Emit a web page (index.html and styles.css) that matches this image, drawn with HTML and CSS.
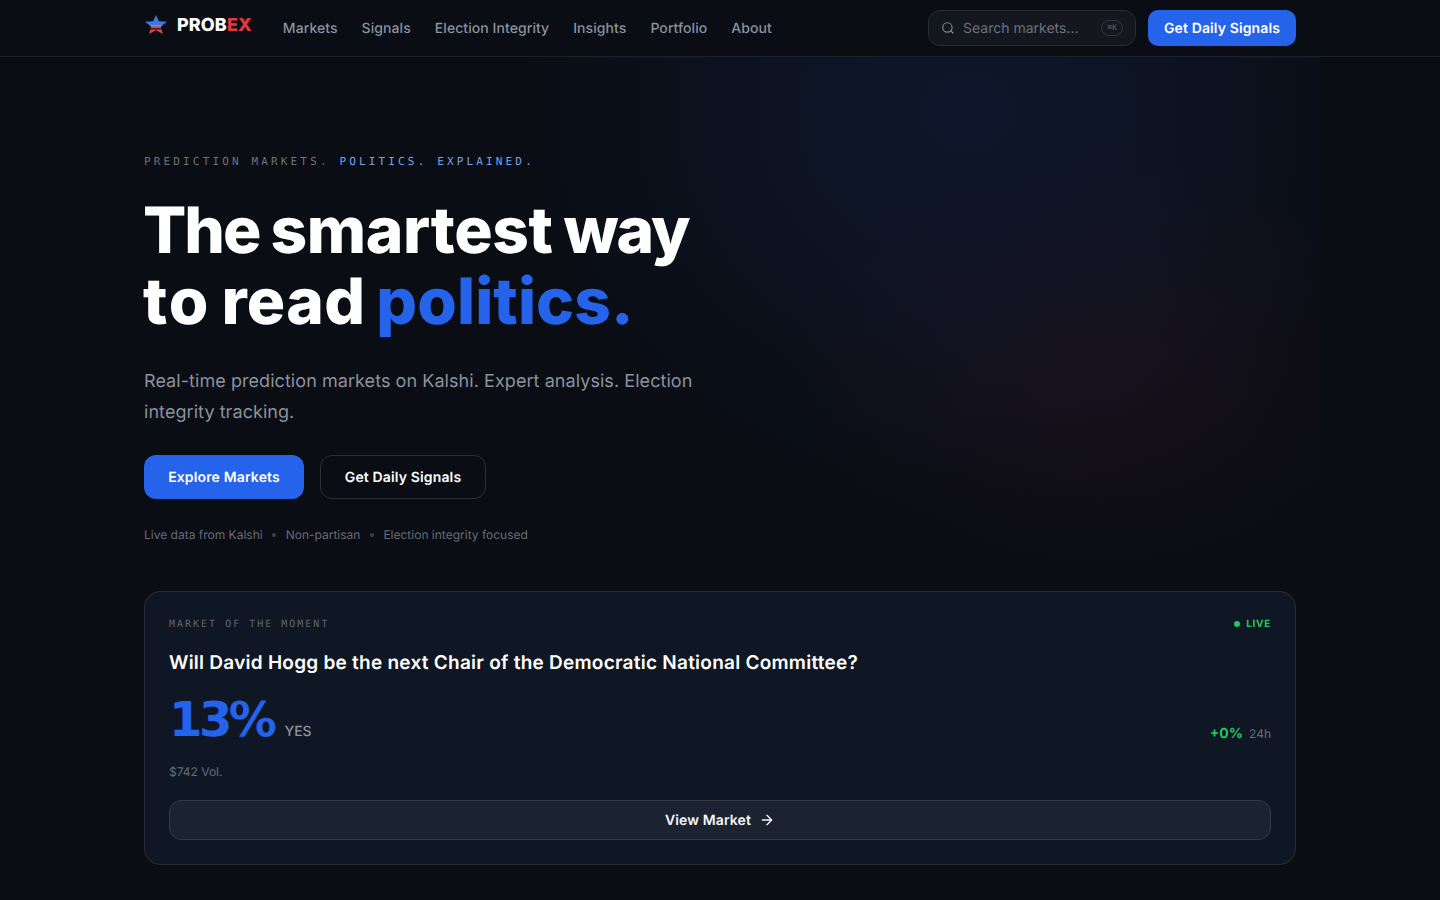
FILE: index.html
```html
<!DOCTYPE html>
<html lang="en">
<head>
<meta charset="utf-8">
<title>ProbEx</title>
<link rel="stylesheet" href="styles.css">
</head>
<body>
<div class="glow" aria-hidden="true"></div>
<header class="topbar">
  <div class="topbar-inner">
    <a class="brand" href="#">
      <svg class="brand-star" width="24" height="20" viewBox="0 0 24 20">
        <defs>
          <clipPath id="starclip"><path d="M12 0l2.900 6.200 8.100.6-6.100 4.600 2 7.600L12 15.200 5.100 19l2-7.600L1 6.800l8.100-.6z"/></clipPath>
        </defs>
        <g clip-path="url(#starclip)">
          <rect x="0" y="0" width="24" height="10.500" fill="#3a78e6"/>
          <rect x="0" y="10.500" width="24" height="1" fill="#dfe3ea"/>
          <rect x="0" y="11.500" width="24" height="2" fill="#d9484c"/>
          <rect x="0" y="13.500" width="24" height="1" fill="#1a1114"/>
          <rect x="0" y="14.500" width="24" height="5" fill="#d9484c"/>
        </g>
      </svg>
      <span class="brand-name">PROB<span class="brand-ex">EX</span></span>
    </a>
    <nav class="nav">
      <a href="#">Markets</a>
      <a href="#">Signals</a>
      <a href="#">Election Integrity</a>
      <a href="#">Insights</a>
      <a href="#">Portfolio</a>
      <a href="#">About</a>
    </nav>
    <div class="topbar-actions">
      <div class="search">
        <svg width="14" height="14" viewBox="0 0 24 24" fill="none" stroke="#7d8590" stroke-width="2" stroke-linecap="round"><circle cx="11" cy="11" r="8"/><path d="M21 21l-4.300-4.300"/></svg>
        <span class="search-text">Search markets...</span>
        <kbd class="kbd">⌘K</kbd>
      </div>
      <a class="btn-small" href="#">Get Daily Signals</a>
    </div>
  </div>
</header>
<main class="page">
  <section class="hero">
    <p class="eyebrow">PREDICTION MARKETS. <span class="eyebrow-blue">POLITICS. EXPLAINED.</span></p>
    <h1 class="headline"><span class="w-tight">The</span> <span class="w-loose">smartest</span> <span class="w-tight">way</span><br><span class="w-wide">to</span> <span class="w-mid">read</span> <span class="headline-blue">politics.</span></h1>
    <p class="lead">Real-time prediction markets on Kalshi. Expert analysis. Election integrity tracking.</p>
    <div class="cta-row">
      <a class="btn btn-primary" href="#">Explore Markets</a>
      <a class="btn btn-ghost" href="#">Get Daily Signals</a>
    </div>
    <ul class="facts">
      <li>Live data from Kalshi</li>
      <li class="fact-dot"></li>
      <li>Non-partisan</li>
      <li class="fact-dot"></li>
      <li>Election integrity focused</li>
    </ul>
  </section>
  <section class="card">
    <div class="card-top">
      <span class="card-label">MARKET OF THE MOMENT</span>
      <span class="live"><span class="live-dot"></span>LIVE</span>
    </div>
    <h2 class="card-title">Will David Hogg be the next Chair of the Democratic National Committee?</h2>
    <div class="stat-row">
      <div class="stat-main"><span class="stat-pct">13%</span><span class="stat-yes">YES</span></div>
      <div class="stat-change"><span class="stat-delta">+0%</span><span class="stat-period">24h</span></div>
    </div>
    <p class="vol">$742 Vol.</p>
    <a class="view" href="#">View Market
      <svg width="16" height="16" viewBox="0 0 24 24" fill="none" stroke="#f4f6f8" stroke-width="2" stroke-linecap="round" stroke-linejoin="round"><path d="M5 12h14M12 5l7 7-7 7"/></svg>
    </a>
  </section>
</main>
</body>
</html>
```
FILE: styles.css
```css
* { box-sizing: border-box; }
html, body { margin: 0; height: 100%; }
body {
  background: #0a0d14;
  color: #fff;
  font-family: Inter, "Liberation Sans", sans-serif;
  text-rendering: geometricPrecision;
  overflow: hidden;
  position: relative;
}
a { color: inherit; text-decoration: none; }
.glow {
  position: absolute;
  left: 520px;
  top: 57px;
  width: 800px;
  height: 543px;
  background:
    radial-gradient(ellipse 330px 240px at 72.5% 58%, rgba(90, 25, 45, 0.15), transparent 100%),
    radial-gradient(ellipse 450px 400px at 56% 10%, rgba(25, 55, 125, 0.23), transparent 100%);
}
.topbar {
  position: relative;
  height: 57px;
  border-bottom: 1px solid #1d212b;
}
.topbar-inner {
  width: 1152px;
  height: 56px;
  margin: 0 auto;
  display: flex;
  align-items: center;
}
.brand { display: flex; align-items: center; gap: 9px; margin-top: -6px; }
.brand-star { display: block; }
.brand-name { font-size: 18px; font-weight: 800; letter-spacing: 0.1px; }
.brand-ex { color: #e5383b; }
.nav { display: flex; gap: 24px; margin-left: 31px; font-size: 14px; font-weight: 500; letter-spacing: 0.07px; color: #8b929e; }
.topbar-actions { margin-left: auto; display: flex; align-items: center; gap: 12px; }
.search {
  width: 208px;
  height: 36px;
  border: 1px solid #2a2e37;
  border-radius: 12px;
  background: #14171e;
  display: flex;
  align-items: center;
  padding: 0 12px;
  gap: 8px;
}
.search-text { font-size: 14px; color: #6b727d; flex: 1; }
.kbd {
  font-family: "DejaVu Sans Mono", monospace;
  font-size: 8px;
  color: #5f6570;
  border: 1px solid #2e323b;
  border-radius: 8px;
  padding: 2px 5px;
  line-height: 10px;
}
.btn-small {
  height: 36px;
  width: 148px;
  border-radius: 10px;
  background: #2563eb;
  font-size: 14px;
  font-weight: 600;
  letter-spacing: 0.12px;
  display: flex;
  align-items: center;
  justify-content: center;
}
.page { position: relative; width: 1152px; margin: 0 auto; }
.hero { padding-top: 99px; }
.eyebrow {
  margin: 0;
  font-family: "DejaVu Sans Mono", monospace;
  font-size: 11px;
  line-height: 12px;
  letter-spacing: 3.15px;
  color: #6c727c;
}
.eyebrow-blue { color: #74a4ee; }
.headline {
  margin: 27px 0 0 -1px;
  font-size: 64px;
  line-height: 71px;
  font-weight: 800;
  letter-spacing: -2px;
  word-spacing: -1px;
}
.w-tight { letter-spacing: -2px; }
.w-loose { letter-spacing: -0.4px; }
.w-wide { letter-spacing: 2px; }
.w-mid { letter-spacing: 0.3px; }
.headline-blue { color: #2563eb; letter-spacing: 0.1px; }
.lead {
  margin: 29px 0 0;
  width: 580px;
  font-size: 18px;
  line-height: 31px;
  letter-spacing: 0.06px;
  color: #8b929e;
}
.cta-row { display: flex; gap: 16px; margin-top: 27px; }
.btn {
  height: 44px;
  border-radius: 12px;
  font-size: 14px;
  font-weight: 600;
  letter-spacing: 0.14px;
  display: flex;
  align-items: center;
  justify-content: center;
}
.btn-primary { width: 160px; background: #2563eb; }
.btn-ghost { width: 166px; border: 1px solid #2a2e37; }
.facts {
  list-style: none;
  margin: 26px 0 0;
  padding: 0;
  display: flex;
  align-items: center;
  gap: 9.5px;
  font-size: 12px;
  line-height: 20px;
  color: #666c77;
}
.fact-dot { width: 4px; height: 4px; border-radius: 50%; background: #3a3f49; }
.card {
  margin-top: 46px;
  height: 274px;
  border: 1px solid #262b36;
  border-radius: 16px;
  background: #101724;
  padding: 24px;
}
.card-top { display: flex; justify-content: space-between; align-items: center; height: 16px; }
.card-label {
  font-family: "DejaVu Sans Mono", monospace;
  font-size: 10px;
  letter-spacing: 2px;
  color: #5f6570;
}
.live {
  display: flex;
  align-items: center;
  gap: 6px;
  font-size: 10px;
  font-weight: 700;
  letter-spacing: 0.7px;
  color: #22c55e;
}
.live-dot { width: 6px; height: 6px; border-radius: 50%; background: #22c55e; }
.card-title { margin: 17px 0 0; font-size: 19px; line-height: 28px; font-weight: 600; letter-spacing: 0.25px; }
.stat-row { display: flex; justify-content: space-between; align-items: flex-end; margin-top: 16px; height: 53px; }
.stat-main { display: flex; align-items: baseline; gap: 10px; }
.stat-pct { font-family: "DejaVu Sans", sans-serif; font-size: 48px; line-height: 52px; font-weight: 700; letter-spacing: -3.5px; color: #2563eb; }
.stat-yes { font-size: 14px; font-weight: 500; color: #8b929e; margin-left: 1px; }
.stat-change { display: flex; align-items: baseline; gap: 6px; padding-bottom: 4px; }
.stat-delta { font-size: 14px; font-weight: 700; color: #22c55e; }
.stat-period { font-size: 12px; color: #666c77; }
.vol { margin: 18px 0 0; font-size: 12px; line-height: 16px; color: #666c77; }
.view {
  margin-top: 20px;
  height: 40px;
  border: 1px solid #323844;
  border-radius: 12px;
  background: #1b2230;
  display: flex;
  align-items: center;
  justify-content: center;
  gap: 8px;
  font-size: 14px;
  font-weight: 600;
  letter-spacing: 0.1px;
  color: #f4f6f8;
}
```
